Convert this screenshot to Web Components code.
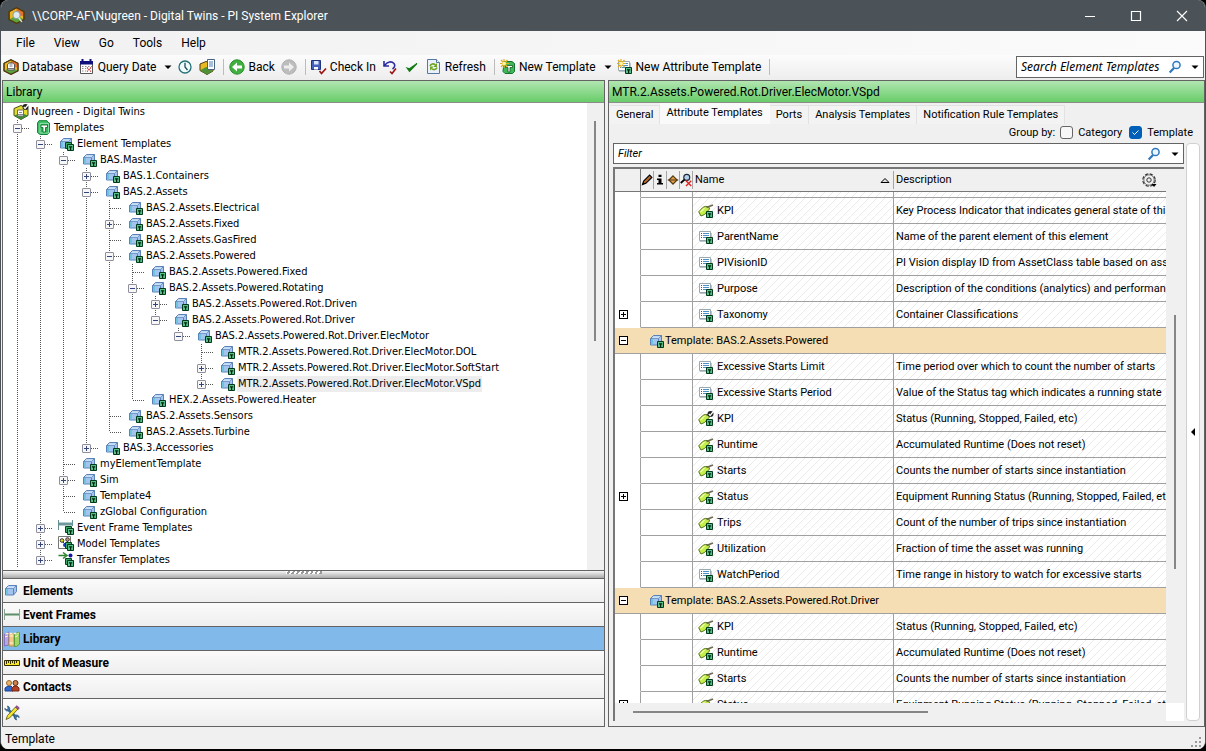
<!DOCTYPE html>
<html lang="en">
<head>
<meta charset="utf-8">
<title>\\CORP-AF\Nugreen - Digital Twins - PI System Explorer</title>
<style>
html, body { height: 100%; }
body {
  margin: 0;
  background: #000;
  color: #000;
  --ui: 12px/16px Roboto, "Noto Sans", sans-serif;
  --uiitalic: italic 12px/16px "Noto Sans", "Open Sans", sans-serif;
  --tree: 11px/16px "DejaVu Sans Condensed", "DejaVu Sans", sans-serif;
  --small: 11px/16px Roboto, "Noto Sans", sans-serif;
  --line: #646464;
  font: var(--ui);
  overflow: hidden;
}
</style>
</head>
<body>
<pse-window>
  <pse-titlebar slot="title">\\CORP-AF\Nugreen - Digital Twins - PI System Explorer</pse-titlebar>
  <pse-menubar slot="menu"></pse-menubar>
  <pse-toolbar slot="tools"></pse-toolbar>
  <pse-panel slot="left" heading="Library">
    <pse-tree></pse-tree>
    <pse-navigator></pse-navigator>
  </pse-panel>
  <pse-panel slot="right" heading="MTR.2.Assets.Powered.Rot.Driver.ElecMotor.VSpd">
    <pse-details></pse-details>
  </pse-panel>
  <pse-status slot="status">Template</pse-status>
</pse-window>

<script>
const define = (name, html, setup) => {
  const template = document.createElement('template');
  template.innerHTML = html;
  customElements.define(name, class extends HTMLElement {
    connectedCallback() {
      if (this.shadowRoot) return;
      this.attachShadow({ mode: 'open' }).append(template.content.cloneNode(true));
      if (setup) setup.call(this, this.shadowRoot);
    }
  });
};

/* ---------- icons ---------- */
const badge = '<path d="M8.500 8.500h6v6h-6z" fill="#58c08a" stroke="#003a1a"/><path d="M10 10.200h3.200v1.200h-1V14h-1.200v-2.600H10z" fill="#00240c"/>';
const badge2 = '<path d="M6.500 6.500h6v6h-6z" fill="#38a865" stroke="#00451f"/>' + badge;
const cube = '<path d="M1.500 5.500l3-3h8v6l-3 3.500h-8z" fill="#a3c4ee" stroke="#5b82b8"/><path d="M1.500 5.500h8v6.500M9.500 5.500l3-3" fill="none" stroke="#5b82b8"/><path d="M4.500 3.200h7l-2 2h-7z" fill="#c9dff8"/><path d="M2 6h2v5.500H2z" fill="#6cc4de"/>';
const spark = '<path d="M4 0v9M0 4.500h9M1 1l6.500 7M7.500 1L1 8" stroke="#e2ac18" stroke-width="1.200"/><circle cx="4.200" cy="4.500" r="1.800" fill="#fff4a8"/>';
const hex = '<path d="M8 .7l7 3.600v7.500L8 15.400 1 11.800V4.300z" fill="#efb71c" stroke="#503c12"/><path d="M8 .9l6.700 3.500v4L8 8z" fill="#e8702a"/><path d="M1.300 11.500L8 8l6.700 3.500L8 15z" fill="#5da33b"/><path d="M8 .7l7 3.600v7.500L8 15.400 1 11.800V4.300z" fill="none" stroke="#503c12" stroke-width="1.200"/>';
const list = '<path d="M1.500 2.500h11v9h-11z" fill="#fff" stroke="#9aa8b2"/><path d="M3 4.500h1M3 6.500h1M3 8.500h1" stroke="#245db0"/><path d="M5 4.500h6M5 6.500h6M5 8.500h4" stroke="#4c90c8"/><path d="M2 12.500h7M13.500 4v4" stroke="#b9c4cb"/>';
const tag = '<path d="M.7 8.800L4.500 4.700c2-1.400 4-1.700 6.300-.7l.7 2-5 5.500L3 13z" fill="#c4ef4b" stroke="#55731c"/><path d="M2.500 9L6.500 5" stroke="#efffac" stroke-width="1.300"/><path d="M8.500 4.500l6.500-2.600" stroke="#6d6a52" stroke-width="1.600"/>';
const tick = '<circle cx="12.500" cy="3" r="3" fill="#222"/><path d="M10.800 3l1.300 1.500L15 1" stroke="#fff" fill="none" stroke-width="1.200"/>';
const lens = '<circle cx="9.500" cy="6" r="3.600" fill="#eef6fe" stroke="#2f78bd" stroke-width="1.500"/><path d="M7 9l-4.300 4.500" stroke="#2f78bd" stroke-width="2.200"/>';
const ICONS = {
  app: hex + '<circle cx="8" cy="7.500" r="3.300" fill="#dcebf2" stroke="#8aa3ad"/><path d="M10 10l3 4" stroke="#dfe5e8" stroke-width="1.500"/>',
  database: hex + '<path d="M4.500 6c0-3 7-3 7 0v5h-7z" fill="#fff" stroke="#555"/><path d="M5 11v-1.500h6V11M6.500 5h3M6.500 7h3" fill="none" stroke="#777"/>',
  root: '<path d="M8 1.500l7 3v7l-7 4-7-4v-7z" fill="#e8dc2c" stroke="#3d4a12"/><path d="M1 11.500L8 9l7 2.500-7 4z" fill="#3f8d3c"/><path d="M4.500 6h6v6h-6z" fill="#fff" stroke="#6c6c6c"/><path d="M6 8.500h3M5 10.500h5" stroke="#888"/>' + tick,
  calendar: '<path d="M1.500 2.500h12v12h-12z" fill="#fff" stroke="#555"/><path d="M1 2h13v3.500H1z" fill="#10107c"/><path d="M3.500 0v3M11.500 0v3" stroke="#10107c" stroke-width="2"/><path d="M3 7.500h10M3 9.500h4M3 12h4" stroke="#888" stroke-dasharray="1.500 1.500"/><path d="M8 8.500l4 4M12 8.500l-4 4" stroke="#d22f2f" stroke-width="1.200" stroke-dasharray="1.500 .8"/>',
  clock: '<circle cx="8" cy="8" r="6" fill="#f1fbfb" stroke="#237078" stroke-width="1.300"/><path d="M8 3.800V8l2.500 3" fill="none" stroke="#1c4d58" stroke-width="1.300"/>',
  contents: '<path d="M7 2.500l7 2.500v7l-6 3.500-7-4V5z" fill="#eab91e" stroke="#4c3c12"/><path d="M1 11.500L7 8l7 4-6 3.500z" fill="#4f9136"/><path d="M8.500.5h7v10h-7z" fill="#fff" stroke="#47637d"/><path d="M10 3h4M10 5h4M10 7h4" stroke="#4c7fb4"/>',
  back: '<circle cx="8" cy="8" r="7.200" fill="#3fb03f" stroke="#2a902a"/><path d="M3 8l5-4.500v3h5v3H8v3z" fill="#fff"/>',
  forward: '<circle cx="8" cy="8" r="7.200" fill="#bdbdbd" stroke="#b0b0b0"/><path d="M13 8L8 3.500v3H3v3h5v3z" fill="#eee"/>',
  checkin: '<path d="M.5 1.500h9v9h-9z" fill="#4460ba" stroke="#20347c"/><path d="M3 2h4.500v3.500H3z" fill="#dce5fa"/><path d="M3 8h4v2.500H3z" fill="#fff"/><path d="M8.500 12l2 2.500L15 9.500" fill="none" stroke="#9d1414" stroke-width="1.700"/>',
  undo: '<path d="M2 2v5h5M2.500 6.500c3-4 7-4.700 9.500-2 1.500 2 .5 4-1.500 5.500" fill="none" stroke="#2b2ba0" stroke-width="1.600"/><path d="M8 12.500l2 2 4-5" fill="none" stroke="#9d1414" stroke-width="1.600"/>',
  apply: '<path d="M3 9l2.500 3.500L13 4.500 5.500 9.800z" fill="#147c14" stroke="#147c14" stroke-width="1.100"/>',
  refresh: '<path d="M1.500.5h9l3 3v11h-12z" fill="#e8f1fd" stroke="#56799f"/><path d="M10.500.5v3h3" fill="#fff" stroke="#56799f"/><path d="M4 7c1-2.500 3.500-2.700 5.500-1M11 8.500c-1 2.500-3.500 2.700-5.500 1" fill="none" stroke="#70a51e" stroke-width="1.600"/><path d="M11 4v4H7.500zM4 11.500v-4h3.500z" fill="#70a51e"/>',
  newtemplate: '<path d="M4 2.500h8l2.500 2v8l-2 2H5l-2-2z" fill="#3fb85b" stroke="#14722c"/><path d="M5.500 6.500h7v2H10V13H8V8.500H5.500z" fill="#fff" stroke="#0c5a20" stroke-width=".8"/>' + spark,
  newattribute: list + badge + spark,
  templates: '<path d="M3 .7h8l1 1.800 1.500.5v9l-2 2.500H4l-2.500-2V3z" fill="#3fbf68" stroke="#108438"/><path d="M4 3.500h8.500V13H4z" fill="#30b359" stroke="#87dfa5"/><path d="M5 5h6.500v2.500h-2V12H7V7.500H5z" fill="#fff" stroke="#0a5f28" stroke-width=".8"/>',
  elements: cube, element: cube + badge, elementgroup: cube + badge2,
  frame: '<path d="M.5 2v11M15.500 2v11" stroke="#8aa491"/><path d="M1 7.500h14" stroke="#5d8e6b" stroke-width="2"/>',
  frametemplate: '<path d="M-.5 0v10M13.500 0v6" stroke="#668f94"/><path d="M0 4h13" stroke="#6f9a9d" stroke-width="3"/>' + badge2,
  model: '<path d="M-.5.500h12v12h-12z" fill="#fff" stroke="#777"/><path d="M3 5l4 4 2-5" fill="none" stroke="#333"/><circle cx="3" cy="4.500" r="1.800" fill="#dfdf27" stroke="#333"/><circle cx="8.500" cy="3.500" r="1.800" fill="#c59576" stroke="#333"/><circle cx="6" cy="9" r="2" fill="#1c38c8"/>' + badge2,
  transfer: '<path d="M-.5 3.500h7M4 .5l4 3-4 3" fill="none" stroke="#2c842c" stroke-width="1.500"/><circle cx="11.500" cy="3.500" r="2" fill="#1515a8"/>' + badge2,
  library: '<path d="M.5 3l4-2v13l-4 1z" fill="#b3a6ea" stroke="#8474bd"/><path d="M5 2.500h5V15H5z" fill="#f1ca8b" stroke="#b98a49"/><path d="M10.500 3l4-2 1 1v11l-3 2.500h-2z" fill="#9fd565" stroke="#5f9a3a"/><path d="M5.500 5h4M5.500 12h4M11 6l3-1.500M1 6l3-1" stroke="#fff3c9"/><path d="M1.500 2.500h13" stroke="#f6f0d8" stroke-width="1.500" stroke-dasharray="3 1"/>',
  measure: '<path d="M.5 5.500h15v5H.5z" fill="#f7e622" stroke="#332e00"/><path d="M2.500 6v3M4.500 6v2M6.500 6v3M8.500 6v2M10.500 6v3M12.500 6v2" stroke="#393400"/>',
  contacts: '<path d="M1 12V9l3-2h3l2 2v3z" fill="#2e68cc" stroke="#1a3f88"/><path d="M8 12V9l2-2h3l2 2v3z" fill="#b53e23" stroke="#752716"/><circle cx="5" cy="4" r="2.500" fill="#e9b468" stroke="#9b692e"/><circle cx="11.500" cy="4" r="2.500" fill="#cf8148" stroke="#5d2d16"/>',
  tools: '<path d="M3.500 4l9 8.500" stroke="#376b98" stroke-width="2.600"/><path d="M.8 3.500c.5 3 3.500 2.800 4.500 1.500S5.500 1.500 3.500 1l.8 2.500-1.500 1.200zM15.200 12.500c-.5-3-3.500-2.800-4.500-1.500s-.2 3.500 1.800 4l-.8-2.500 1.500-1.200z" fill="#4d86b3" stroke="#24507a" stroke-width=".8"/><path d="M2 14.500l1.500-4 8-8.500 2.500 2-8.500 9z" fill="#f1e52f" stroke="#564f13" stroke-width=".8"/><path d="M11.500 2L13 .7 15.300 3 14 4.500z" fill="#ad53a7" stroke="#602b5c" stroke-width=".7"/>',
  list: list + badge, tag: tag + badge, tagcheck: tag + tick + badge,
  search: lens,
  pencil: '<path d="M2 14l1.500-4.500 8-8 3 3-8 8z" fill="#b56a2c" stroke="#000" stroke-width="1.500"/><path d="M2 14l1-3.500L5.500 13z" fill="#000"/>',
  info: '<path d="M6 1h4v3H6zM4 6h6v6h2v2H4v-2h2V8H4z" fill="#000"/>',
  diamond: '<path d="M8 2.500L13.500 8 8 13.500 2.500 8z" fill="#dc9e48" stroke="#52350f" stroke-width="1.500"/><path d="M1 8h14" stroke="#52350f" stroke-width="1.300"/>',
  exclude: '<circle cx="9" cy="4.500" r="4" fill="#b5d0ed" stroke="#1c2730" stroke-width="1.500"/><path d="M6 7.500L1 12" stroke="#000" stroke-width="2.500"/><path d="M8 9l7 7M15 9l-7 7" stroke="#de2121" stroke-width="1.800"/>',
  gear: '<circle cx="8" cy="8" r="6.200" fill="none" stroke="#333" stroke-width="1.200" stroke-dasharray="3.300 1.570"/><circle cx="8" cy="8" r="5.200" fill="none" stroke="#555" stroke-width=".8"/><circle cx="8" cy="8" r="2.200" fill="none" stroke="#333"/><path d="M10.500 12h5L13 15z" fill="#000"/>',
  arrow: '<path d="M4.500 6.500h7L8 10z" fill="#000"/>',
  sort: '<path d="M4 10.500h8L8 6.500z" fill="#ddd" stroke="#000"/>',
  collapse: '<path d="M8 4v8L4 8z" fill="#000"/>',
  minimize: '<path d="M3 8.500h10" stroke="#fff"/>',
  maximize: '<path d="M3.500 3.500h9v9h-9z" fill="none" stroke="#fff" stroke-width="1.200"/>',
  close: '<path d="M3 3l10 10M13 3L3 13" stroke="#fff" stroke-width="1.100"/>'
};
define('pse-icon', `<style>:host{display:block;flex:none;width:16px;height:16px}svg{display:block;width:100%;height:100%;overflow:visible}</style>
<svg viewBox="0 0 16 16" aria-hidden="true"></svg>`, function (root) {
  root.querySelector('svg').innerHTML = ICONS[this.getAttribute('name')];
});

/* ---------- window frame ---------- */
define('pse-window', `<style>
:host{display:flex;flex-direction:column;height:100vh;box-sizing:border-box;padding:0 0 2px;background:#000}
.frame{flex:1;min-height:0;display:flex;flex-direction:column;background:#f0f0f0;border:solid #4b5257;border-width:0 1px;border-radius:8px;overflow:hidden}
main{flex:1;min-height:0;display:grid;grid-template-columns:minmax(0,603fr) minmax(0,597fr);gap:3px;padding-left:1px}
</style>
<div class="frame">
<slot name="title"></slot><slot name="menu"></slot><slot name="tools"></slot>
<main><slot name="left"></slot><slot name="right"></slot></main>
<slot name="status"></slot></div>`);

define('pse-titlebar', `<style>
:host{display:flex;align-items:center;height:31px;flex:none;background:#4b5358;color:#fff;padding-left:7px}
h1{font:var(--ui);margin:0 0 0 7px;flex:1}
pse-icon.app{width:17px;height:17px}
button{border:0;background:none;padding:0;width:46px;height:31px;display:grid;place-items:center}
</style>
<pse-icon class="app" name="app"></pse-icon><h1><slot></slot></h1>
<button aria-label="Minimize"><pse-icon name="minimize"></pse-icon></button>
<button aria-label="Maximize"><pse-icon name="maximize"></pse-icon></button>
<button aria-label="Close"><pse-icon name="close"></pse-icon></button>`);

define('pse-menubar', `<style>
:host{display:block;flex:none;background:linear-gradient(90deg,#f1f1f1,#fbfbfb)}
nav{display:flex;height:24px;padding-left:7px}
button{font:var(--ui);border:0;background:none;padding:0 8px;margin-right:3px}
</style>
<nav><button>File</button><button>View</button><button>Go</button><button>Tools</button><button>Help</button></nav>`);

define('pse-toolbar', `<style>
:host{display:flex;align-items:center;flex:none;height:24px;background:linear-gradient(#fcfcfc,#ededed);padding:0 1px 1px 2px}
button{font:var(--ui);border:0;background:none;padding:0;margin:0 6px 0 0;display:flex;align-items:center;gap:3px;white-space:nowrap}
i{width:1px;height:16px;background:#bcbcbc;margin:0 5px 0 2px}
.grow{flex:1}
.arrow{margin:0 1px 0 -2px}
label{display:flex;align-items:center;width:188px;height:22px;box-sizing:border-box;border:1px solid #646464;background:#fff;padding-left:4px}
input{flex:1;min-width:0;border:0;outline:0;padding:0;background:none;font:var(--uiitalic)}
input::placeholder{color:#000;opacity:1}
label button{margin:0 4px 0 0}
label button:last-child{margin:0}
</style>
<button><pse-icon name="database"></pse-icon>Database</button>
<button><pse-icon name="calendar"></pse-icon>Query Date</button><button class="arrow" aria-label="Query date options"><pse-icon name="arrow"></pse-icon></button>
<button aria-label="Time"><pse-icon name="clock"></pse-icon></button>
<button aria-label="Contents"><pse-icon name="contents"></pse-icon></button><i></i>
<button><pse-icon name="back"></pse-icon>Back</button>
<button aria-label="Forward"><pse-icon name="forward"></pse-icon></button><i></i>
<button><pse-icon name="checkin"></pse-icon>Check In</button>
<button aria-label="Undo"><pse-icon name="undo"></pse-icon></button>
<button aria-label="Apply"><pse-icon name="apply"></pse-icon></button>
<button><pse-icon name="refresh"></pse-icon>Refresh</button><i></i>
<button><pse-icon name="newtemplate"></pse-icon>New Template</button><button class="arrow" aria-label="New template options"><pse-icon name="arrow"></pse-icon></button>
<button><pse-icon name="newattribute"></pse-icon>New Attribute Template</button><i></i>
<span class="grow"></span>
<label><input placeholder="Search Element Templates" aria-label="Search Element Templates"><button aria-label="Search"><pse-icon name="search"></pse-icon></button><button aria-label="Search options"><pse-icon name="arrow"></pse-icon></button></label>`);

define('pse-panel', `<style>
:host{display:flex;flex-direction:column;min-width:0;min-height:0;border:1px solid var(--line)}
h2{flex:none;margin:0;height:21px;font:var(--ui);line-height:22px;padding-left:3px;background:linear-gradient(#b2e6b2,#68cc68);border-bottom:1px solid #8b8b8b}
</style><h2></h2><slot></slot>`, function (root) {
  root.querySelector('h2').textContent = this.getAttribute('heading');
});

define('pse-status', `<style>:host{display:flex;justify-content:space-between;align-items:center;height:22px;flex:none;padding:0 2px 0 4px;background:#f0f0f0}
svg{align-self:flex-end}span{padding-top:2px}</style><span><slot></slot></span>
<svg width="12" height="12" viewBox="0 0 12 12" aria-hidden="true"><path d="M8 0h2v2H8zM4 4h2v2H4zM8 4h2v2H8zM0 8h2v2H0zM4 8h2v2H4zM8 8h2v2H8z" fill="#9a9a9a"/></svg>`);

/* ---------- library tree: [label, icon, state, children] ---------- */
const A = 'BAS.2.Assets.', P = A + 'Powered.', M = 'MTR.2.Assets.Powered.Rot.Driver.ElecMotor.';
const leaf = (label, state = '') => [label, 'element', state, []];
const open = (label, icon, children) => [label, icon, '-', children];
const TREE = open('Templates', 'templates', [
  open('Element Templates', 'elementgroup', [
    open('BAS.Master', 'element', [
      leaf('BAS.1.Containers', '+'),
      open('BAS.2.Assets', 'element', [
        leaf(A + 'Electrical'), leaf(A + 'Fixed', '+'), leaf(A + 'GasFired'),
        open(A + 'Powered', 'element', [
          leaf(P + 'Fixed'),
          open(P + 'Rotating', 'element', [
            leaf(P + 'Rot.Driven', '+'),
            open(P + 'Rot.Driver', 'element', [
              open(P + 'Rot.Driver.ElecMotor', 'element', [leaf(M + 'DOL'), leaf(M + 'SoftStart', '+'), leaf(M + 'VSpd', '+')])
            ])
          ]),
          leaf('HEX.2.Assets.Powered.Heater')
        ]),
        leaf(A + 'Sensors'), leaf(A + 'Turbine')
      ]),
      leaf('BAS.3.Accessories', '+')
    ]),
    leaf('myElementTemplate'), leaf('Sim', '+'), leaf('Template4'), leaf('zGlobal Configuration')
  ]),
  ['Event Frame Templates', 'frametemplate', '+', []],
  ['Model Templates', 'model', '+', []],
  ['Transfer Templates', 'transfer', '+', []]
]);

define('pse-tree', `<style>
:host{display:flex;flex:1;min-height:0;background:#fff;font:var(--tree)}
.rows{flex:1;min-width:0;overflow:hidden;padding:1px 0 0 3px}
.row{display:flex;height:16px;white-space:nowrap}
.row pse-icon{margin:0 1px 0 7px}
.row span{padding:0 1px}
.selected{background:#ededed}
.guide{flex:none;width:23px;height:16px;display:grid;grid-template:8px 8px/11px 1px 11px;--v:repeating-linear-gradient(#555 0 1px,#fff 1px 2px)}
.up::before{content:"";grid-area:1/2/2/3;background:var(--v)}
.down::after{content:"";grid-area:2/2/3/3;background:var(--v)}
.h{background:repeating-linear-gradient(90deg,#555 0 1px,#fff 1px 2px) 12px 8px/11px 1px no-repeat}
.guide button{grid-area:1/1/3/4;place-self:center;width:9px;height:9px;padding:0;border:1px solid #8f8f9c;border-radius:1px;background:linear-gradient(#33457e,#33457e) center/5px 1px no-repeat,#f7f7f7;z-index:1}
.guide button.plus{background:linear-gradient(#33457e,#33457e) center/5px 1px no-repeat,linear-gradient(#33457e,#33457e) center/1px 5px no-repeat,#f7f7f7}
.scroll{flex:none;width:17px;background:#f0f0f0;padding-top:18px}
.thumb{width:2px;height:49%;margin-left:7px;background:#868686}
</style><div class="rows" role="tree"></div><div class="scroll"><div class="thumb"></div></div>`, function (root) {
  const rows = root.querySelector('.rows');
  const add = (label, icon, state, guides) => {
    const row = document.createElement('div');
    row.className = 'row';
    row.setAttribute('role', 'treeitem');
    guides.forEach((kind, i) => {
      const guide = document.createElement('div');
      guide.className = 'guide ' + kind;
      if (i === guides.length - 1 && state) {
        const button = document.createElement('button');
        button.className = state === '+' ? 'plus' : '';
        button.setAttribute('aria-label', (state === '+' ? 'Expand ' : 'Collapse ') + label);
        guide.append(button);
      }
      row.append(guide);
    });
    const glyph = document.createElement('pse-icon');
    glyph.setAttribute('name', icon);
    const text = document.createElement('span');
    text.textContent = label;
    if (label === M + 'VSpd') text.className = 'selected';
    row.append(glyph, text);
    rows.append(row);
  };
  const walk = ([label, icon, state, children], trail, last) => {
    add(label, icon, state, [...trail, last ? 'up h' : 'up down h']);
    children.forEach((child, i) => walk(child, [...trail, last ? '' : 'up down'], i === children.length - 1));
  };
  add('Nugreen - Digital Twins', 'root', '', []);
  walk(TREE, [], false);
});

/* ---------- navigator ---------- */
define('pse-navigator', `<style>
:host{display:block;flex:none}
.split{height:7px;border:solid var(--line);border-width:1px 0;background:linear-gradient(#f6f6f6,#a9a9a9);display:grid;place-items:start center}
.split::after{content:"";width:36px;height:3px;background:repeating-linear-gradient(120deg,#fff 0 2px,#999 2px 4px)}
button{display:flex;align-items:center;gap:3px;width:100%;height:24px;border:0;border-bottom:1px solid var(--line);padding:0 0 0 1px;background:linear-gradient(#fbfbfb,#eee);font:var(--ui);font-weight:bold}
button[aria-current]{background:#80b9ea}
.tray{height:27px;display:flex;align-items:center;background:linear-gradient(#fbfbfb,#eee)}
.tray button{border:0;background:none}
</style><div class="split"></div>
<button><pse-icon name="elements"></pse-icon>Elements</button>
<button><pse-icon name="frame"></pse-icon>Event Frames</button>
<button aria-current="page"><pse-icon name="library"></pse-icon>Library</button>
<button><pse-icon name="measure"></pse-icon>Unit of Measure</button>
<button><pse-icon name="contacts"></pse-icon>Contacts</button>
<div class="tray"><button aria-label="Configure"><pse-icon name="tools"></pse-icon></button></div>`);

/* ---------- details ---------- */
define('pse-details', `<style>
:host{display:flex;flex-direction:column;flex:1;min-height:0;background:#f0f0f0;font:var(--small)}
.tabs{flex:none;display:flex;align-items:flex-end;height:21px;padding-left:1px}
.tabs button{font:var(--small);height:19px;padding:0 6px;border:1px solid #e2e2e2;border-left:0;border-bottom:0;background:#f3f3f3;white-space:nowrap}
.tabs button[aria-selected=true]{height:21px;background:#fafafa;border-color:#fafafa;padding-bottom:3px}
.body{flex:1;min-height:0;display:grid;grid-template:19px 21px minmax(0,1fr)/minmax(0,1fr) 14px;gap:0 2px;padding:0 4px 5px}
.group{grid-column:1/3;display:flex;align-items:center;justify-content:flex-end;gap:5px;padding:0 7px 2px 0}
.group label{display:flex;align-items:center;gap:5px;margin-right:2px}
.group label+label{margin-right:0}
.group input{appearance:none;box-sizing:border-box;width:13px;height:13px;margin:0;border:1px solid #666;border-radius:3px;background:#f7f7f7}
.group input:checked{border-color:#005fb8;background:#005fb8 url('data:image/svg+xml,<svg xmlns="http://www.w3.org/2000/svg" viewBox="0 0 11 11"><path d="M2.500 5.500l2 2 4-4" fill="none" stroke="white"/></svg>')}
.filter{display:flex;align-items:center;border:1px solid var(--line);background:#fff;padding-left:4px;box-sizing:border-box}
.filter input{flex:1;min-width:0;border:0;outline:0;padding:0;background:none;font:italic var(--small)}
.filter input::placeholder{color:#000;opacity:1}
.filter button{border:0;background:none;padding:0;margin-left:5px}
.side{grid-area:2/2/4/3;border:1px solid #d0d0d0;border-radius:4px;background:#fff;padding:0;display:grid;place-items:center}
pse-grid{margin-top:3px}
</style>
<div class="tabs" role="tablist"><button role="tab">General</button><button role="tab" aria-selected="true">Attribute Templates</button><button role="tab">Ports</button><button role="tab">Analysis Templates</button><button role="tab">Notification Rule Templates</button></div>
<div class="body">
<div class="group"><span>Group by:</span><label><input type="checkbox">Category</label><label><input type="checkbox" checked>Template</label></div>
<div class="filter"><input placeholder="Filter" aria-label="Filter"><button aria-label="Search"><pse-icon name="search"></pse-icon></button><button aria-label="Filter options"><pse-icon name="arrow"></pse-icon></button></div>
<pse-grid></pse-grid>
<button class="side" aria-label="Show side pane"><pse-icon name="collapse"></pse-icon></button>
</div>`);

/* [icon, name, description, expander] ; a one-item row is a group heading */
const ROWS = [
  ['', '', ''],
  ['tag', 'KPI', 'Key Process Indicator that indicates general state of this'],
  ['list', 'ParentName', 'Name of the parent element of this element'],
  ['list', 'PIVisionID', 'PI Vision display ID from AssetClass table based on asset'],
  ['list', 'Purpose', 'Description of the conditions (analytics) and performance'],
  ['list', 'Taxonomy', 'Container Classifications', '+'],
  ['Template: BAS.2.Assets.Powered'],
  ['list', 'Excessive Starts Limit', 'Time period over which to count the number of starts'],
  ['list', 'Excessive Starts Period', 'Value of the Status tag which indicates a running state'],
  ['tagcheck', 'KPI', 'Status (Running, Stopped, Failed, etc)'],
  ['tag', 'Runtime', 'Accumulated Runtime (Does not reset)'],
  ['tag', 'Starts', 'Counts the number of starts since instantiation'],
  ['tag', 'Status', 'Equipment Running Status (Running, Stopped, Failed, etc)', '+'],
  ['tag', 'Trips', 'Count of the number of trips since instantiation'],
  ['tag', 'Utilization', 'Fraction of time the asset was running'],
  ['list', 'WatchPeriod', 'Time range in history to watch for excessive starts'],
  ['Template: BAS.2.Assets.Powered.Rot.Driver'],
  ['tag', 'KPI', 'Status (Running, Stopped, Failed, etc)'],
  ['tag', 'Runtime', 'Accumulated Runtime (Does not reset)'],
  ['tag', 'Starts', 'Counts the number of starts since instantiation'],
  ['tag', 'Status', 'Equipment Running Status (Running, Stopped, Failed, etc)', '+'],
];
define('pse-grid', `<style>
:host{display:grid;grid-template:minmax(0,1fr) 18px/minmax(0,1fr) 18px;min-height:0;border:solid #777;border-width:2px 0 0 2px;background:#f0f0f0;font:var(--small)}
.view{overflow:hidden;background:#fff}
table{width:100%;table-layout:fixed;border-collapse:separate;border-spacing:0}
th,td{padding:0;font-weight:normal;text-align:left;white-space:nowrap;overflow:hidden;box-sizing:border-box}
th{position:sticky;top:0;z-index:1;height:23px;background:#f0f0f0;border-bottom:1px solid #777}
th:first-child{border-right:1px solid #777}
th div{display:flex;align-items:center;height:18px;border-right:1px solid #a5a5a5;padding-left:2px}
th:last-child div{border:0;padding-right:9px}
th:first-child div{border:0}
th.mini pse-icon{width:12px;height:12px}
th.mini div{padding:0}
th span{flex:1}
td{height:26px;border-bottom:1px solid #a0a0a0;border-right:1px solid #a0a0a0}
td:first-child{border-bottom-color:#fff}
td:last-child{border-right:0}
.hatch{background:linear-gradient(135deg,#0000 44%,#ebebeb 44% 50%,#0000 50% 94%,#ebebeb 94%) 0 0/8px 8px}
td>div{display:flex;align-items:center;gap:3px;padding-left:5px}
td:last-child>div{padding-left:2px}
td:first-child>div{padding-left:4px}
td button{width:9px;height:9px;box-sizing:border-box;padding:0;border:1px solid #000;background:linear-gradient(#000,#000) center/5px 1px no-repeat,#fff}
td button.plus{background:linear-gradient(#000,#000) center/5px 1px no-repeat,linear-gradient(#000,#000) center/1px 5px no-repeat,#fff}
.band td{background:#f5deb3;border-right:0}
.band td:first-child{border-bottom-color:#a0a0a0}
.band td:last-child>div{padding-left:8px;gap:0}
.vs{padding-top:146px}
.vs div{width:2px;height:254px;margin-left:8px;background:#868686}
.hs{padding:8px 0 0 18px}
.hs div{width:295px;height:2px;background:#868686}
.corner{background:#fff}
</style>
<div class="view"><table>
<colgroup><col style="width:26px"><col style="width:13px"><col style="width:13px"><col style="width:13px"><col style="width:13px"><col style="width:201px"><col></colgroup>
<thead><tr><th><div></div></th><th class="mini"><div><pse-icon name="pencil"></pse-icon></div></th><th class="mini"><div><pse-icon name="info"></pse-icon></div></th><th class="mini"><div><pse-icon name="diamond"></pse-icon></div></th><th class="mini"><div><pse-icon name="exclude"></pse-icon></div></th>
<th><div><span>Name</span><pse-icon name="sort"></pse-icon></div></th><th><div><span>Description</span><pse-icon name="gear"></pse-icon></div></th></tr></thead>
<tbody></tbody></table></div>
<div class="vs"><div></div></div><div class="hs"><div></div></div><div class="corner"></div>`, function (root) {
  const expander = state => state ? `<button class="${state === '+' ? 'plus' : ''}" aria-label="${state === '+' ? 'Expand' : 'Collapse'}"></button>` : '';
  root.querySelector('tbody').innerHTML = ROWS.map(row => row.length === 1
    ? `<tr class="band"><td><div>${expander('-')}</div></td><td colspan="6"><div><pse-icon name="element"></pse-icon>${row[0]}</div></td></tr>`
    : `<tr><td><div>${expander(row[3])}</div></td><td colspan="4"></td><td class="hatch"><div>${row[0] ? `<pse-icon name="${row[0]}"></pse-icon>` : ''}${row[1]}</div></td><td class="hatch"><div>${row[2]}</div></td></tr>`
  ).join('');
  root.querySelector('.view').scrollTop = 20;
});
</script>
</body>
</html>
